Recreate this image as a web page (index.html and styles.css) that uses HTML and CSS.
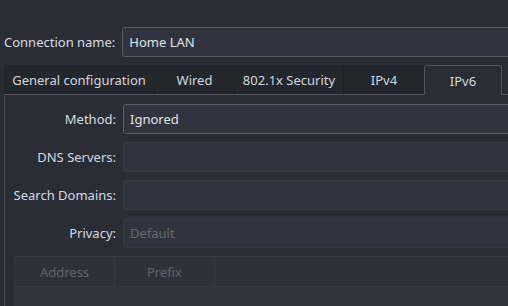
FILE: index.html
```html
<!DOCTYPE html>
<html lang="en">
<head>
  <meta charset="UTF-8">
  <meta name="viewport" content="width=device-width, initial-scale=1.0">
  <title>Connection - Home LAN</title>
  <link rel="stylesheet" href="styles.css">
</head>
<body>
  <div class="window">
    <div class="name-row">
      <label for="conn-name">Connection name:</label>
      <input type="text" id="conn-name" class="field" value="Home LAN">
    </div>

    <div class="tabs">
      <div class="tab tab-general">General configuration</div>
      <div class="tab tab-wired">Wired</div>
      <div class="tab tab-security">802.1x Security</div>
      <div class="tab tab-ipv4">IPv4</div>
      <div class="tab tab-ipv6 active">IPv6</div>
      <div class="tab-rest"></div>
    </div>

    <div class="panel">
      <div class="form">
        <label class="form-label" for="method">Method:</label>
        <div class="field" id="method">Ignored</div>

        <label class="form-label" for="dns">DNS Servers:</label>
        <div class="field disabled" id="dns"></div>

        <label class="form-label" for="domains">Search Domains:</label>
        <div class="field disabled" id="domains"></div>

        <label class="form-label" for="privacy">Privacy:</label>
        <div class="field disabled" id="privacy">Default</div>
      </div>

      <div class="table">
        <div class="table-head">
          <div class="col">Address</div>
          <div class="col">Prefix</div>
          <div class="col col-wide"></div>
        </div>
        <div class="table-body"></div>
      </div>
    </div>
  </div>
</body>
</html>
```

FILE: styles.css
```css
* {
  box-sizing: border-box;
  margin: 0;
  padding: 0;
  font-family: 'Noto Sans', 'Open Sans', sans-serif;
}

html,
body {
  overflow: hidden;
}

body {
  background-color: #2a2d36;
  color: #d6dae1;
  font-size: 13px;
  width: 508px;
  height: 306px;
}

.window {
  width: 560px;
  padding: 27px 0 0 4px;
}

/* connection name */
.name-row {
  display: flex;
  align-items: center;
  gap: 7px;
}

.name-row label {
  color: #d6dae1;
}

.field {
  flex: 1;
  height: 30px;
  background-color: #31343e;
  border: 1px solid #5a5d66;
  border-radius: 3px;
  color: #e1e4ea;
  font-size: 13px;
  padding: 0 6px;
  display: flex;
  align-items: center;
  outline: none;
}

.field.disabled {
  border-color: #373a44;
  color: #646873;
}

/* tabs */
.tabs {
  display: flex;
  height: 30px;
  margin-top: 8px;
}

.tab {
  display: flex;
  align-items: center;
  justify-content: center;
  background-color: #24262e;
  border-right: 1px solid #1f2128;
  border-bottom: 1px solid #51545d;
  color: #d2d6dd;
}

.tab-general { width: 151px; }
.tab-wired { width: 80px; }
.tab-security { width: 109px; }
.tab-ipv4 { width: 80px; border-right: none; }

.tab.active {
  width: 78px;
  background-color: #2a2d36;
  border: 1px solid #51545d;
  border-bottom: none;
  border-radius: 3px 3px 0 0;
}

.tab-rest {
  flex: 1;
  border-bottom: 1px solid #51545d;
}

/* panel */
.panel {
  border-left: 1px solid #42454e;
  padding-top: 9px;
  min-height: 220px;
}

.form {
  display: grid;
  grid-template-columns: 111px 1fr;
  column-gap: 7px;
  row-gap: 8px;
  align-items: center;
}

.form-label {
  text-align: right;
  color: #d6dae1;
}

/* address table */
.table {
  margin: 8px 0 0 9px;
  border: 1px solid #363943;
  border-right: none;
  border-radius: 2px 0 0 0;
}

.table-head {
  display: flex;
  height: 30px;
  background-color: #2e313a;
  border-bottom: 1px solid #363943;
}

.col {
  width: 100px;
  display: flex;
  align-items: center;
  justify-content: center;
  color: #5f636d;
  border-right: 1px solid #363943;
}

.col-wide {
  flex: 1;
  border-right: none;
}

.table-body {
  height: 40px;
  background-color: #30333c;
}
```
